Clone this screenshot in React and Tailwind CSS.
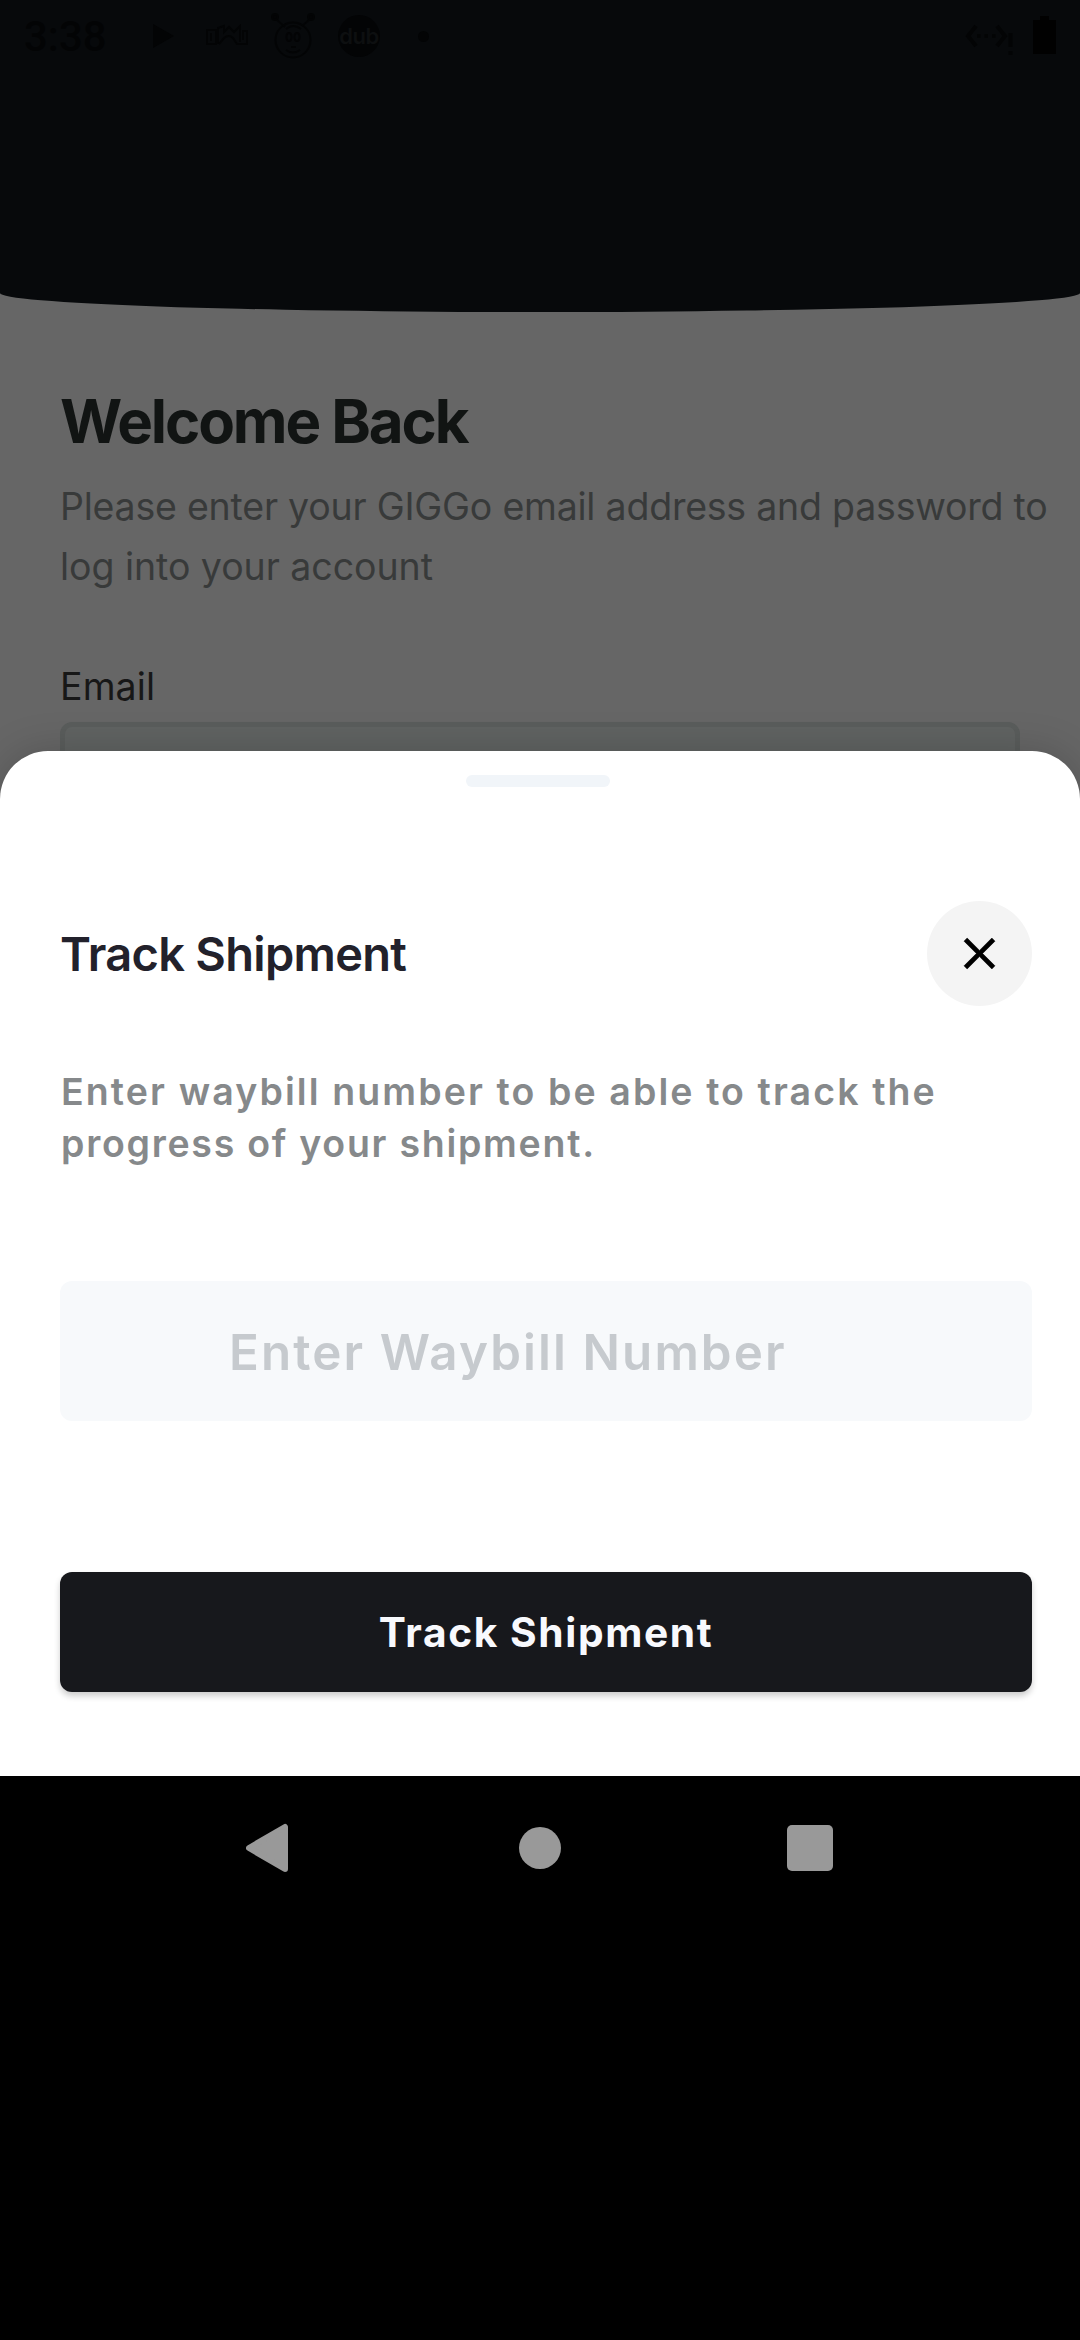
function StatusBar() {
  return (
    <div className="flex h-[74px] items-start text-[#030405]">
      <span className="ml-[24px] mt-[12px] w-[83px] whitespace-nowrap font-['Roboto'] text-[42px] font-medium leading-[50px]">3:38</span>
      <svg className="ml-[46px] mt-[24px] h-[24px] w-[21px]" viewBox="0 0 21 24">
        <path d="M0 0 L21 12 L0 24 Z" fill="currentColor" />
      </svg>
      <svg className="ml-[31px] mt-[24px] h-[22px] w-[44px]" viewBox="0 0 44 22" fill="none" stroke="currentColor" strokeWidth="2">
        <path d="M2 6 H11 V20 H2 Z M6 9 V17" />
        <path d="M13 20 V4 L19 2 V8 L24 3 L29 8 L35 2 V18" />
        <path d="M14 20 L19 14 Q24 10 28 14 L32 20 H42 V7 H38 V16" />
      </svg>
      <svg className="ml-[20px] mt-[9px] h-[52px] w-[50px]" viewBox="0 0 50 52" fill="none" stroke="currentColor" strokeWidth="2">
        <circle cx="24" cy="31" r="17.5" />
        <circle cx="6" cy="8" r="3" fill="currentColor" />
        <circle cx="42" cy="8" r="3" fill="currentColor" />
        <path d="M8 11 L16 18 M40 11 L33 17 M17 20 Q24 14 32 20" />
        <path d="M17 41 Q24 46 31 41 M22 38 H27" />
        <ellipse cx="20" cy="28" rx="2.5" ry="4" />
        <ellipse cx="28" cy="28" rx="2.5" ry="4" />
      </svg>
      <div className="ml-[19px] mt-[15px] flex h-[42px] w-[42px] items-center justify-center rounded-full bg-[#030405]">
        <span className="font-['Inter'] text-[22px] font-semibold leading-none tracking-[-0.5px] text-[#0d0f10]">dub</span>
      </div>
      <div className="ml-[38px] mt-[31px] h-[11px] w-[11px] rounded-full bg-[#030405]" />
      <svg className="ml-auto mt-[24px] h-[32px] w-[48px]" viewBox="0 0 48 32" fill="none" stroke="currentColor" strokeWidth="4">
        <path d="M11 2 L3 12 L11 22 M32 2 L40 12 L32 22" />
        <path d="M12 12 H31" strokeWidth="3.5" strokeDasharray="3.5 4" />
        <path d="M45.5 9 V23 M45.5 27 V31" />
      </svg>
      <svg className="ml-[20px] mr-[24px] mt-[16px] h-[38px] w-[23px]" viewBox="0 0 23 38">
        <path d="M7 0 H16 V4 H23 V38 H0 V4 H7 Z" fill="#010101" />
      </svg>
    </div>
  );
}

function LoginPage() {
  return (
    <div className="h-[1776px] bg-[#666666]">
      <div className="h-[312px] rounded-b-[50%_19px] bg-[#07090b]">
        <StatusBar />
      </div>
      <div className="pl-[60px] pt-[73px]">
        <h1 className="whitespace-nowrap text-[60px] font-bold leading-[72px] tracking-[-2.1px] text-[#111413]">Welcome Back</h1>
        <p className="mt-[20px] whitespace-nowrap text-[37.5px] leading-[60px] tracking-[-0.22px] text-[#383a3a]">
          Please enter your GIGGo email address and password to
          <br />
          <span className="tracking-[-0.05px]">log into your account</span>
        </p>
        <p className="mt-[66px] text-[37.5px] leading-[48px] tracking-[0.1px] text-[#171717]">Email</p>
        <div className="mt-[11px] h-[150px] w-[960px] rounded-[12px] border-[5px] border-[#5a5d5c] bg-[#606362]" />
      </div>
    </div>
  );
}

function TrackSheet() {
  return (
    <div className="absolute inset-x-0 bottom-0 flex h-[1025px] flex-col rounded-t-[48px] bg-white pl-[60px] pr-[48px] pt-[24px] shadow-[0_0_40px_rgba(0,0,0,0.18)]">
      <div className="ml-[406px] h-[12px] w-[144px] rounded-full bg-[#f1f5f9]" />
      <div className="mt-[114px] flex h-[105px] items-center justify-between">
        <h2 className="whitespace-nowrap text-[47px] font-semibold leading-[60px] tracking-[-0.7px] text-[#22212b]">Track Shipment</h2>
        <button className="flex h-[105px] w-[105px] items-center justify-center rounded-full bg-[#f4f4f4]">
          <svg className="h-[53px] w-[53px]" viewBox="0 0 24 24">
            <path d="M19 6.41 17.59 5 12 10.59 6.41 5 5 6.41 10.59 12 5 17.59 6.41 19 12 13.41 17.59 19 19 17.59 13.41 12z" fill="#000000" stroke="#000000" strokeWidth="0.25" />
          </svg>
        </button>
      </div>
      <p className="ml-px mt-[60px] whitespace-nowrap text-[37.5px] font-semibold leading-[52px] tracking-[2.1px] text-[#86898b]">
        Enter waybill number to be able to track the
        <br />
        <span className="tracking-[1.73px]">progress of your shipment.</span>
      </p>
      <div className="mt-[111px] flex h-[140px] items-center rounded-[12px] bg-[#f7f9fb] pl-[169px]">
        <span className="whitespace-nowrap pt-[2px] text-[49.3px] font-semibold leading-[60px] tracking-[2.1px] text-[#c6cace]">Enter Waybill Number</span>
      </div>
      <button className="mt-[151px] flex h-[120px] items-center justify-center rounded-[12px] bg-[#17181c] pt-px text-[40.7px] font-bold leading-[50px] tracking-[1.6px] text-[#f8f9fd] shadow-[0_4px_6px_rgba(0,0,0,0.2)]">
        Track Shipment
      </button>
    </div>
  );
}

function NavBar() {
  return (
    <div className="flex h-[144px] items-center bg-black pl-[246px] text-[#999999]">
      <svg className="h-[50px] w-[42px]" viewBox="0 0 42 50">
        <path d="M3 25 L39 4 V46 Z" fill="currentColor" stroke="currentColor" strokeWidth="6" strokeLinejoin="round" />
      </svg>
      <div className="ml-[231px] h-[42px] w-[42px] rounded-full bg-[#999999]" />
      <div className="ml-[226px] h-[46px] w-[46px] rounded-[5px] bg-[#999999]" />
    </div>
  );
}

export default function App() {
  return (
    <div className="h-[2340px] w-[1080px] overflow-hidden bg-black font-['Inter',sans-serif]">
      <div className="relative h-[1776px] overflow-hidden">
        <LoginPage />
        <TrackSheet />
      </div>
      <NavBar />
    </div>
  );
}
